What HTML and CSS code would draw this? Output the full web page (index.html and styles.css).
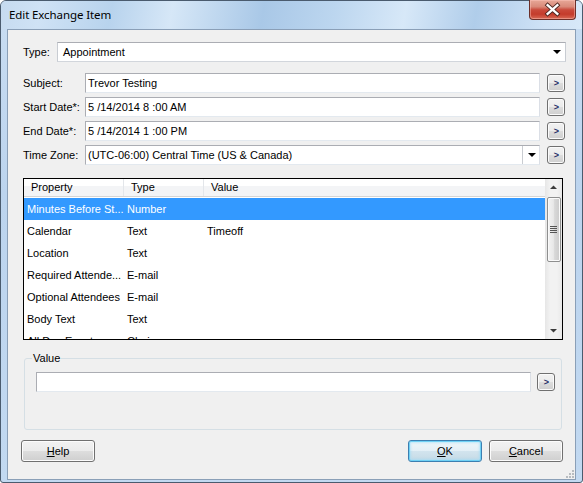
FILE: index.html
```html
<!DOCTYPE html>
<html>
<head>
<meta charset="utf-8">
<link rel="stylesheet" href="styles.css">
</head>
<body>
<div class="window">
  <div class="titlebar">
    <span class="title">Edit Exchange Item</span>
    <div class="close">
      <svg width="46" height="20" viewBox="0 0 46 20">
        <path d="M18 5 L28 14 M28 5 L18 14" stroke="#4a2520" stroke-width="4.2" stroke-linecap="square"/>
        <path d="M18 5 L28 14 M28 5 L18 14" stroke="#ffffff" stroke-width="2.4" stroke-linecap="square"/>
      </svg>
    </div>
  </div>
  <div class="client">
    <div class="type-row">
      <span class="lbl lbl-type">Type:</span>
      <div class="box combo-type">
        <span class="box-text">Appointment</span>
        <span class="dd-arrow"></span>
      </div>
    </div>

    <div class="fields">
      <div class="frow">
        <span class="lbl">Subject:</span>
        <div class="box field"><span class="box-text">Trevor Testing</span></div>
        <button class="more">&gt;</button>
      </div>
      <div class="frow">
        <span class="lbl">Start Date*:</span>
        <div class="box field"><span class="box-text">5 /14/2014 8 :00 AM</span></div>
        <button class="more">&gt;</button>
      </div>
      <div class="frow">
        <span class="lbl">End Date*:</span>
        <div class="box field"><span class="box-text">5 /14/2014 1 :00 PM</span></div>
        <button class="more">&gt;</button>
      </div>
      <div class="frow">
        <span class="lbl">Time Zone:</span>
        <div class="box field combo-tz">
          <span class="box-text">(UTC-06:00) Central Time (US &amp; Canada)</span>
          <span class="tz-btn"><span class="dd-arrow"></span></span>
        </div>
        <button class="more">&gt;</button>
      </div>
    </div>

    <div class="listview">
      <div class="lv-main">
        <div class="lv-header">
          <div class="hcol c1">Property</div>
          <div class="hcol c2">Type</div>
          <div class="hcol c3">Value</div>
        </div>
        <div class="lv-body">
          <div class="lv-row selected"><span class="c1">Minutes Before St...</span><span class="c2">Number</span><span class="c3"></span></div>
          <div class="lv-row"><span class="c1">Calendar</span><span class="c2">Text</span><span class="c3">Timeoff</span></div>
          <div class="lv-row"><span class="c1">Location</span><span class="c2">Text</span><span class="c3"></span></div>
          <div class="lv-row"><span class="c1">Required Attende...</span><span class="c2">E-mail</span><span class="c3"></span></div>
          <div class="lv-row"><span class="c1">Optional Attendees</span><span class="c2">E-mail</span><span class="c3"></span></div>
          <div class="lv-row"><span class="c1">Body Text</span><span class="c2">Text</span><span class="c3"></span></div>
          <div class="lv-row"><span class="c1">All Day Event</span><span class="c2">Choice</span><span class="c3"></span></div>
        </div>
      </div>
      <div class="scrollbar">
        <div class="sb-arrow">
          <svg width="17" height="17" viewBox="0 0 17 17"><path d="M5 10 L12 10 L8.5 6.5 Z" fill="#3c3c3c"/></svg>
        </div>
        <div class="sb-track">
          <div class="sb-thumb">
            <svg width="8" height="8" viewBox="0 0 8 8">
              <path d="M0 0.5 H7 M0 2.5 H7 M0 4.5 H7 M0 6.5 H7" stroke="#555" stroke-width="1"/>
            </svg>
          </div>
        </div>
        <div class="sb-arrow">
          <svg width="17" height="17" viewBox="0 0 17 17"><path d="M5 7 L12 7 L8.5 10.5 Z" fill="#3c3c3c"/></svg>
        </div>
      </div>
    </div>

    <fieldset class="group">
      <legend class="legend">Value</legend>
      <div class="group-row">
        <div class="box value-box"></div>
        <button class="more">&gt;</button>
      </div>
    </fieldset>

    <div class="buttons">
      <button class="btn"><u>H</u>elp</button>
      <span class="spacer"></span>
      <button class="btn default"><u>O</u>K</button>
      <button class="btn"><u>C</u>ancel</button>
    </div>

    <div class="grip">
      <svg width="10" height="10" viewBox="0 0 10 10">
        <rect x="7" y="1" width="2" height="2" fill="#b8bcc0"/>
        <rect x="4" y="4" width="2" height="2" fill="#b8bcc0"/>
        <rect x="7" y="4" width="2" height="2" fill="#b8bcc0"/>
        <rect x="1" y="7" width="2" height="2" fill="#b8bcc0"/>
        <rect x="4" y="7" width="2" height="2" fill="#b8bcc0"/>
        <rect x="7" y="7" width="2" height="2" fill="#b8bcc0"/>
      </svg>
    </div>
  </div>
</div>
</body>
</html>
```

FILE: styles.css
```css
* { box-sizing: border-box; }

body {
  margin: 0;
  width: 583px;
  height: 483px;
  overflow: hidden;
  background: #ffffff;
  font-family: "Liberation Sans", Arial, sans-serif;
  font-size: 11px;
  color: #000;
}

.window {
  width: 583px;
  height: 483px;
  border: 1px solid #4a5b6e;
  border-radius: 6px 6px 3px 3px;
  background: linear-gradient(to bottom, #c9ddf2 0%, #bcd4ee 40%, #c2d9f1 100%);
  display: flex;
  flex-direction: column;
  padding: 0 6px 2px 6px;
}

.titlebar {
  height: 28px;
  flex: none;
  position: relative;
  display: flex;
  align-items: center;
  margin: 0 -6px;
  padding-left: 8px;
  padding-bottom: 1px;
  border-radius: 5px 5px 0 0;
  background: linear-gradient(100deg,
    #c6dbf0 0px, #cfe2f5 40px, #b8d3ed 110px, #d6e7f7 170px,
    #a9c8e7 260px, #bcd6ef 330px, #d7e8f8 400px, #b0cdea 470px,
    #cfe2f6 540px, #d9e9f8 583px);
}

.title {
  font-family: "Noto Sans", "Open Sans", sans-serif;
  font-size: 11.5px;
  color: #000;
  letter-spacing: -0.1px;
}

.close {
  position: absolute;
  right: 6px;
  top: -1px;
  width: 47px;
  height: 20px;
  border: 1px solid #6b2f29;
  border-top: none;
  border-radius: 0 0 4px 4px;
  background: linear-gradient(to bottom, #e7a898 0%, #d98a7a 35%, #c9493a 52%, #c43c2c 75%, #d86a56 100%);
  box-shadow: inset 0 0 0 1px rgba(255, 200, 190, 0.45);
  display: flex;
}

.client {
  flex: 1;
  position: relative;
  border: 1px solid #8a9fb7;
  background: #f0f0f0;
  display: flex;
  flex-direction: column;
}

/* ---------- Type row ---------- */
.type-row {
  display: flex;
  align-items: center;
  margin-top: 12px;
  height: 20px;
  padding-left: 15px;
}

.lbl {
  width: 62px;
  flex: none;
  white-space: nowrap;
}

.lbl-type { width: 34px; }

.box {
  background: #ffffff;
  border: 1px solid #abadb3;
  border-right-color: #dbdfe6;
  border-bottom-color: #e3e9ef;
  height: 20px;
  display: flex;
  align-items: center;
  position: relative;
}

.box-text {
  padding-left: 2px;
  white-space: nowrap;
}

.combo-type {
  width: 509px;
  border-color: #abadb3 #c8ccd2 #d2d6dc #c8ccd2;
}

.combo-type .box-text { padding-left: 5px; flex: 1; }

.dd-arrow {
  width: 0;
  height: 0;
  border-left: 4px solid transparent;
  border-right: 4px solid transparent;
  border-top: 4px solid #000;
  margin-right: 4px;
}

/* ---------- Field rows ---------- */
.fields {
  margin-top: 11px;
  display: flex;
  flex-direction: column;
  gap: 4px;
  padding-left: 15px;
}

.frow {
  display: flex;
  align-items: center;
  height: 20px;
}

.field { width: 455px; }

.combo-tz .box-text { flex: 1; }

.tz-btn {
  width: 17px;
  height: 18px;
  border-left: 1px solid #c9ccd1;
  display: flex;
  align-items: center;
  justify-content: center;
}

.tz-btn .dd-arrow { margin: 0 0 0 1px; }

.more {
  margin-left: 7px;
  width: 18px;
  height: 18px;
  padding: 0 0 1px 1px;
  border: 1px solid #707070;
  border-radius: 3px;
  background: linear-gradient(to bottom, #f2f2f2 0%, #ebebeb 50%, #dddddd 51%, #cfcfcf 100%);
  box-shadow: inset 0 0 0 1px #fbfbfb;
  font-family: "Liberation Sans", Arial, sans-serif;
  font-size: 9px;
  font-weight: bold;
  color: #1f2f6a;
  line-height: 14px;
  text-align: center;
}

/* ---------- List view ---------- */
.listview {
  margin: 13px 0 0 15px;
  width: 540px;
  height: 162px;
  border: 1px solid #000;
  background: #fff;
  display: flex;
  flex: none;
}

.lv-main {
  flex: 1;
  display: flex;
  flex-direction: column;
  overflow: hidden;
}

.lv-header {
  height: 18px;
  flex: none;
  display: flex;
  border-bottom: 1px solid #d5d5d5;
  background: linear-gradient(to bottom, #ffffff 0%, #ffffff 40%, #f3f4f6 41%, #f3f4f6 100%);
}

.hcol {
  padding-left: 7px;
  line-height: 16px;
  border-right: 1px solid #e3e6ea;
  white-space: nowrap;
}

.lv-header .c3 { border-right: none; }

.c1 { width: 100px; flex: none; }
.c2 { width: 80px; flex: none; }
.c3 { flex: 1; }

.lv-body {
  flex: 1;
  overflow: hidden;
  padding-top: 1px;
}

.lv-row {
  height: 22px;
  display: flex;
  align-items: center;
  white-space: nowrap;
}

.lv-row span { padding-left: 3px; overflow: hidden; }

.lv-row.selected {
  background: #3399ff;
  color: #ffffff;
}

.scrollbar {
  width: 17px;
  flex: none;
  display: flex;
  flex-direction: column;
  background: linear-gradient(to right, #e6e6e6 0%, #f2f2f2 30%, #f2f2f2 70%, #e9e9e9 100%);
}

.sb-arrow {
  height: 17px;
  flex: none;
  display: flex;
}

.sb-track {
  flex: 1;
  padding: 1px 1px 0 2px;
}

.sb-thumb {
  height: 65px;
  border: 1px solid #8e8f8f;
  border-radius: 2px;
  background: linear-gradient(to right, #f3f3f3 0%, #e8e8e8 45%, #d8d8d8 55%, #cbcbcb 100%);
  box-shadow: inset 0 0 0 1px #fafafa;
  display: flex;
  align-items: center;
  justify-content: center;
}

/* ---------- Group box ---------- */
.group {
  margin: 12px 0 0 16px;
  width: 538px;
  padding: 0 0 37px 0;
  border: 1px solid #d5dfe5;
  border-radius: 3px;
  flex: none;
}

.legend {
  margin-left: 7px;
  padding: 0 1px;
  line-height: 13px;
  font-size: 11px;
}

.group-row {
  display: flex;
  align-items: center;
  margin-top: 7px;
  padding-left: 11px;
  height: 20px;
}

.value-box { width: 495px; }

.group-row .more { margin-left: 6px; }

/* ---------- Buttons ---------- */
.buttons {
  display: flex;
  align-items: center;
  margin-top: 10px;
  padding: 0 12px 0 13px;
  gap: 7px;
}

.spacer { flex: 1; }

.btn {
  width: 74px;
  height: 22px;
  border: 1px solid #707070;
  border-radius: 3px;
  background: linear-gradient(to bottom, #f2f2f2 0%, #ebebeb 50%, #dddddd 51%, #cfcfcf 100%);
  box-shadow: inset 0 0 0 1px #fcfcfc;
  font-family: "Liberation Sans", Arial, sans-serif;
  font-size: 11px;
  color: #000;
  padding: 0;
}

.btn.default {
  border-color: #3c7fb1;
  box-shadow: inset 0 0 0 1px #6fd1f5, inset 0 0 2px 2px rgba(150, 220, 250, 0.5);
  background: linear-gradient(to bottom, #eef6fa 0%, #e3eff6 50%, #d2e4ee 51%, #c4dae6 100%);
}

.grip {
  position: absolute;
  right: 0;
  bottom: 0;
  width: 10px;
  height: 10px;
  display: flex;
}
```
